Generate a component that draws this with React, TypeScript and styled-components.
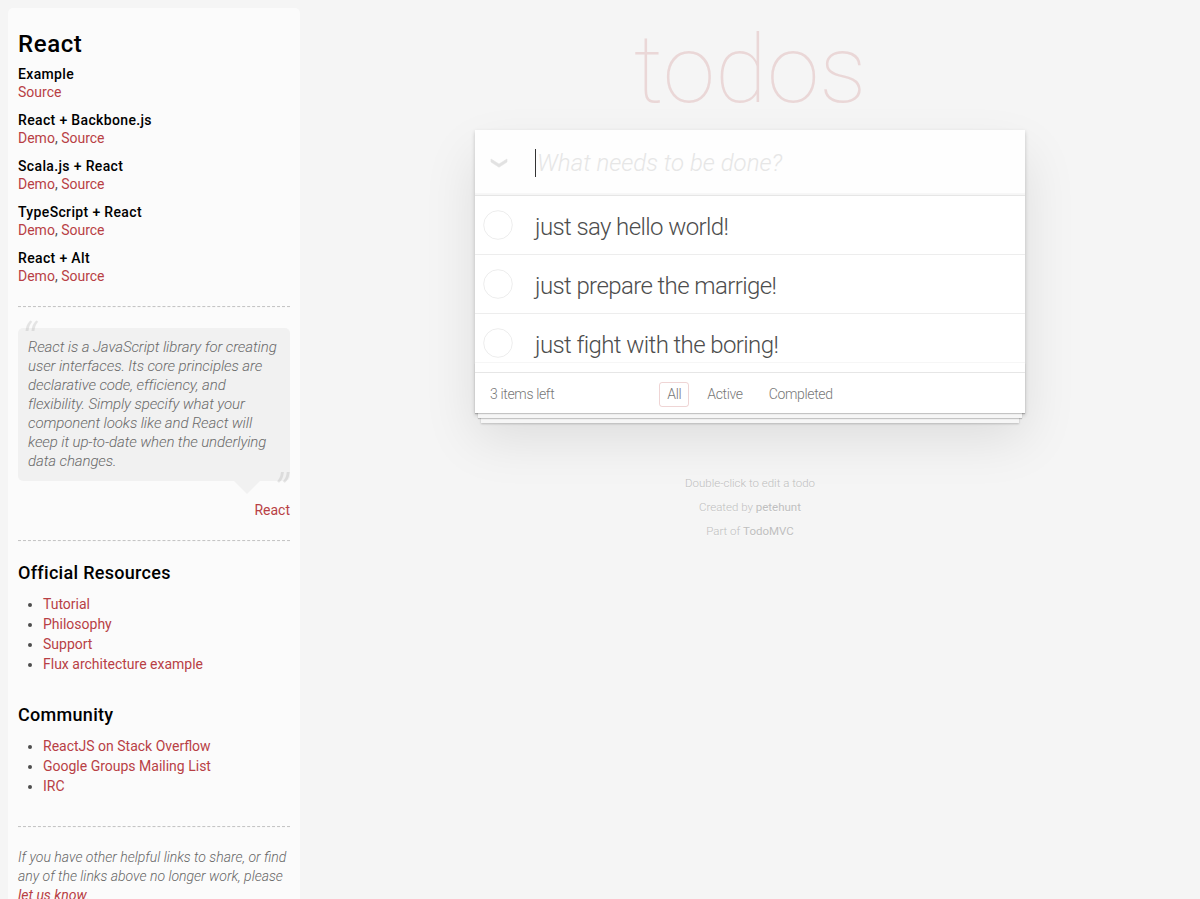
import React from 'react';
import styled, { createGlobalStyle } from 'styled-components';

const FONT = `Roboto, "Liberation Sans", Arial, sans-serif`;

const GlobalStyle = createGlobalStyle`
  html, body {
    margin: 0;
    padding: 0;
  }
  body {
    font-family: ${FONT};
    font-size: 14px;
    line-height: 1.4em;
    font-weight: 300;
    color: #4d4d4d;
    background: #f5f5f5;
    -webkit-font-smoothing: antialiased;
  }
`;

const Page = styled.div`
  display: flex;
  height: 100vh;
  overflow: hidden;
`;

/* ---------- sidebar ---------- */

const Sidebar = styled.aside`
  flex: 0 0 272px;
  width: 272px;
  align-self: flex-start;
  margin: 8px 0 0 8px;
  padding: 10px;
  border-radius: 5px;
  background: rgba(255, 255, 255, 0.6);
`;

const FrameworkTitle = styled.h3`
  margin: 10px 0 7px;
  padding-top: 2px;
  font-size: 24px;
  font-weight: 500;
  line-height: 28.8px;
  letter-spacing: 0.6px;
  color: #000;
`;

const ExampleGroup = styled.div`
  & + & {
    margin-top: 10px;
  }
`;

const ExampleTitle = styled.h5`
  margin: 0;
  font-size: 14px;
  font-weight: 500;
  line-height: 17px;
  letter-spacing: 0.35px;
  color: #000;
`;

const LinkLine = styled.div`
  line-height: 19px;
  font-weight: 400;
`;

const Link = styled.a`
  color: #b83f45;
  font-weight: 400;
  text-decoration: none;
`;

const Rule = styled.hr`
  margin: 20px 0;
  border: 0;
  border-top: 1px dashed #c5c5c5;
  border-bottom: 1px dashed #f7f7f7;
`;

const Bubble = styled.blockquote`
  position: relative;
  margin: 20px 0 0;
  padding: 10px;
  border-radius: 5px;
  background: rgba(0, 0, 0, 0.04);

  &::after {
    content: '';
    position: absolute;
    top: 100%;
    right: 30px;
    border: 13px solid transparent;
    border-top-color: rgba(0, 0, 0, 0.04);
  }
`;

const QuoteText = styled.p`
  margin: 0;
  font-size: 15px;
  font-weight: 300;
  font-style: italic;
  line-height: 19px;
  letter-spacing: -0.1px;
  color: #6a6a6a;

  &::before,
  &::after {
    position: absolute;
    font-size: 50px;
    line-height: 1;
    opacity: 0.15;
  }
  &::before {
    content: '“';
    top: -12px;
    left: 3px;
  }
  &::after {
    content: '”';
    bottom: -37px;
    right: 2px;
  }
`;

const QuoteCredit = styled.div`
  margin-top: 20px;
  text-align: right;
  line-height: 19.6px;
`;

const SectionTitle = styled.h4`
  margin: 10px 0;
  font-size: 18px;
  font-weight: 500;
  line-height: 1.2;
  letter-spacing: 0.3px;
  color: #000;
`;

const LinkList = styled.ul`
  margin: 0 0 30px 25px;
  padding: 0;
`;

const LinkItem = styled.li`
  line-height: 20px;
`;

const Note = styled.p`
  margin: 0;
  font-style: italic;
  font-weight: 300;
  line-height: 19px;
  color: #666;
`;

/* ---------- todo app ---------- */

const Main = styled.main`
  flex: 1;
  display: flex;
  flex-direction: column;
  align-items: center;
`;

const Title = styled.h1`
  margin: 0;
  box-sizing: border-box;
  height: 130px;
  padding-top: 22px;
  width: 550px;
  font-size: 95px;
  font-weight: 100;
  line-height: 1;
  text-align: center;
  color: rgba(175, 47, 47, 0.15);
`;

const TodoApp = styled.section`
  position: relative;
  width: 550px;
  background: #fff;
  box-shadow: 0 2px 4px 0 rgba(0, 0, 0, 0.2), 0 25px 50px 0 rgba(0, 0, 0, 0.1);
`;

const NewTodo = styled.div`
  display: flex;
  align-items: center;
  height: 65px;
  background: rgba(0, 0, 0, 0.003);
  box-shadow: inset 0 -2px 1px rgba(0, 0, 0, 0.03);
`;

const ToggleAll = styled.div`
  flex: 0 0 60px;
  box-sizing: border-box;
  display: flex;
  padding-left: 15px;
`;

const Caret = styled.span`
  width: 1px;
  height: 28px;
  background: #333;
`;

const Placeholder = styled.span`
  margin: 3px 0 0 1px;
  font-size: 24px;
  font-style: italic;
  font-weight: 300;
  line-height: 33.6px;
  color: #e6e6e6;
`;

const TodoList = styled.ul`
  margin: 0;
  padding: 0;
  list-style: none;
  border-top: 1px solid #e6e6e6;
`;

const TodoItem = styled.li`
  display: flex;
  align-items: center;
  height: 58px;
  padding-left: 8px;
  gap: 22px;
  border-bottom: 1px solid #ededed;
  font-size: 24px;
  line-height: 28px;
  color: #4d4d4d;

  &:last-child {
    border-bottom: 0;
  }
`;

const TodoLabel = styled.label`
  margin-top: 4px;
  letter-spacing: -0.6px;
  word-break: break-all;
`;

const Footer = styled.footer`
  position: relative;
  display: grid;
  grid-template-columns: 1fr auto 1fr;
  align-items: center;
  height: 20px;
  padding: 9px 15px 11px;
  border-top: 1px solid #e6e6e6;
  color: #777;
  font-size: 14px;
  letter-spacing: -0.35px;

  &::before {
    content: '';
    position: absolute;
    right: 0;
    bottom: 0;
    left: 0;
    height: 50px;
    overflow: hidden;
    pointer-events: none;
    box-shadow: 0 1px 1px rgba(0, 0, 0, 0.2), 0 8px 0 -3px #f6f6f6,
      0 9px 1px -3px rgba(0, 0, 0, 0.2), 0 16px 0 -6px #f6f6f6,
      0 17px 2px -6px rgba(0, 0, 0, 0.2);
  }
  &::after {
    content: '';
    position: absolute;
    left: 0;
    right: 0;
    top: -11px;
    height: 1px;
    background: #f6f6f6;
  }
`;

const Count = styled.span`
  text-align: left;
`;

const Filters = styled.ul`
  display: flex;
  gap: 10px;
  margin: 0;
  padding: 0;
  list-style: none;
`;

const FilterLink = styled.a<{ $selected?: boolean }>`
  display: block;
  padding: 3px 7px;
  line-height: 17px;
  border: 1px solid ${(p) => (p.$selected ? 'rgba(175, 47, 47, 0.2)' : 'transparent')};
  border-radius: 3px;
  color: inherit;
  text-decoration: none;
`;

const Info = styled.footer`
  margin-top: 58px;
  width: 550px;
  color: #bfbfbf;
  font-size: 11.5px;
  text-align: center;
  text-shadow: 0 1px 0 rgba(255, 255, 255, 0.5);
`;

const InfoLine = styled.p`
  margin: 0;
  line-height: 24px;
`;

const InfoLink = styled.a`
  color: inherit;
  font-weight: 400;
  text-decoration: none;
`;

function Circle() {
  return (
    <svg width="30" height="30" viewBox="0 0 30 30" aria-hidden="true">
      <circle cx="15" cy="15" r="14.3" fill="none" stroke="#ededed" strokeWidth="1" />
    </svg>
  );
}

function Chevron() {
  return (
    <svg width="18" height="10" viewBox="0 0 18 10" aria-hidden="true">
      <path
        d="M1 1 L9 6 L17 1 L17 4 L9 9.2 L1 4 Z"
        fill="#e2e2e2"
        stroke="#e2e2e2"
        strokeWidth="0.6"
        strokeLinejoin="round"
      />
    </svg>
  );
}

const examples = [
  { title: 'Example', demo: false },
  { title: 'React + Backbone.js', demo: true },
  { title: 'Scala.js + React', demo: true },
  { title: 'TypeScript + React', demo: true },
  { title: 'React + Alt', demo: true },
];

const todos = ['just say hello world!', 'just prepare the marrige!', 'just fight with the boring!'];

export default function App() {
  return (
    <>
      <GlobalStyle />
      <Page>
        <Sidebar>
          <FrameworkTitle>React</FrameworkTitle>
          {examples.map((ex) => (
            <ExampleGroup key={ex.title}>
              <ExampleTitle>{ex.title}</ExampleTitle>
              <LinkLine>
                {ex.demo && (
                  <>
                    <Link href="#">Demo</Link>,{' '}
                  </>
                )}
                <Link href="#">Source</Link>
              </LinkLine>
            </ExampleGroup>
          ))}
          <Rule />
          <Bubble>
            <QuoteText>
              React is a JavaScript library for creating user interfaces. Its core principles are
              declarative code, efficiency, and flexibility. Simply specify what your component looks
              like and React will keep it up-to-date when the underlying data changes.
            </QuoteText>
          </Bubble>
          <QuoteCredit>
            <Link href="#">React</Link>
          </QuoteCredit>
          <Rule />
          <SectionTitle>Official Resources</SectionTitle>
          <LinkList>
            <LinkItem><Link href="#">Tutorial</Link></LinkItem>
            <LinkItem><Link href="#">Philosophy</Link></LinkItem>
            <LinkItem><Link href="#">Support</Link></LinkItem>
            <LinkItem><Link href="#">Flux architecture example</Link></LinkItem>
          </LinkList>
          <SectionTitle>Community</SectionTitle>
          <LinkList>
            <LinkItem><Link href="#">ReactJS on Stack Overflow</Link></LinkItem>
            <LinkItem><Link href="#">Google Groups Mailing List</Link></LinkItem>
            <LinkItem><Link href="#">IRC</Link></LinkItem>
          </LinkList>
          <Rule />
          <Note>
            If you have other helpful links to share, or find any of the links above no longer work,
            please <Link href="#">let us know</Link>.
          </Note>
        </Sidebar>
        <Main>
          <Title>todos</Title>
          <TodoApp>
            <NewTodo>
              <ToggleAll>
                <Chevron />
              </ToggleAll>
              <Caret />
              <Placeholder>What needs to be done?</Placeholder>
            </NewTodo>
            <TodoList>
              {todos.map((t) => (
                <TodoItem key={t}>
                  <Circle />
                  <TodoLabel>{t}</TodoLabel>
                </TodoItem>
              ))}
            </TodoList>
            <Footer>
              <Count>3 items left</Count>
              <Filters>
                <li><FilterLink href="#" $selected>All</FilterLink></li>
                <li><FilterLink href="#">Active</FilterLink></li>
                <li><FilterLink href="#">Completed</FilterLink></li>
              </Filters>
            </Footer>
          </TodoApp>
          <Info>
            <InfoLine>Double-click to edit a todo</InfoLine>
            <InfoLine>
              Created by <InfoLink href="#">petehunt</InfoLink>
            </InfoLine>
            <InfoLine>
              Part of <InfoLink href="#">TodoMVC</InfoLink>
            </InfoLine>
          </Info>
        </Main>
      </Page>
    </>
  );
}
